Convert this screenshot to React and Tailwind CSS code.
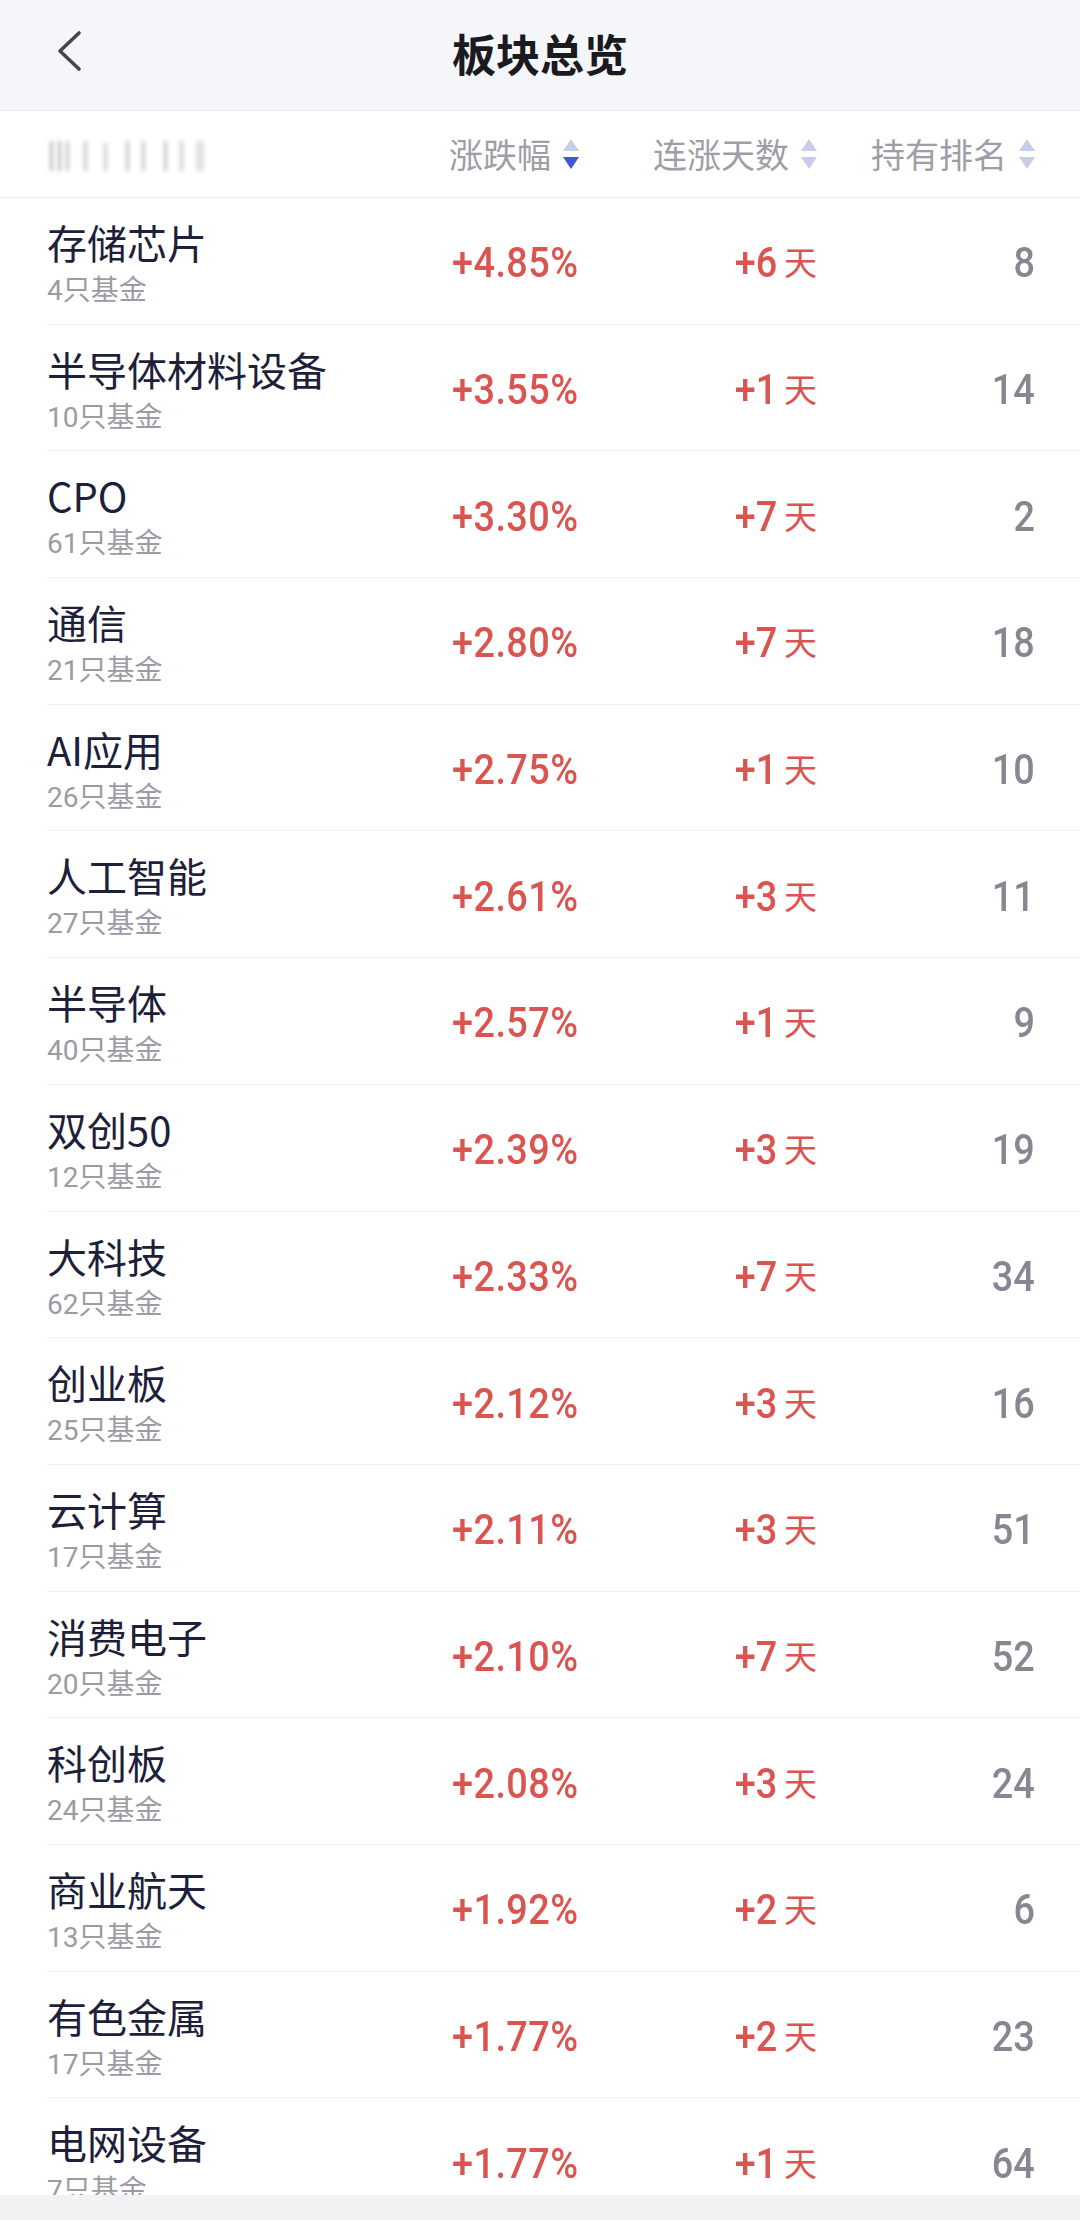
import React from "react";

const rows = [
  ["存储芯片", "4只基金", "+4.85%", "+6", "8"],
  ["半导体材料设备", "10只基金", "+3.55%", "+1", "14"],
  ["CPO", "61只基金", "+3.30%", "+7", "2"],
  ["通信", "21只基金", "+2.80%", "+7", "18"],
  ["AI应用", "26只基金", "+2.75%", "+1", "10"],
  ["人工智能", "27只基金", "+2.61%", "+3", "11"],
  ["半导体", "40只基金", "+2.57%", "+1", "9"],
  ["双创50", "12只基金", "+2.39%", "+3", "19"],
  ["大科技", "62只基金", "+2.33%", "+7", "34"],
  ["创业板", "25只基金", "+2.12%", "+3", "16"],
  ["云计算", "17只基金", "+2.11%", "+3", "51"],
  ["消费电子", "20只基金", "+2.10%", "+7", "52"],
  ["科创板", "24只基金", "+2.08%", "+3", "24"],
  ["商业航天", "13只基金", "+1.92%", "+2", "6"],
  ["有色金属", "17只基金", "+1.77%", "+2", "23"],
  ["电网设备", "7只基金", "+1.77%", "+1", "64"],
];

const cjk = "font-['Noto_Sans_CJK_SC',sans-serif]";
const num = "font-['Roboto','Noto_Sans_CJK_SC',sans-serif]";

function SortIcon({ active }) {
  return (
    <svg width="16" height="30" viewBox="0 0 16 30" className="shrink-0">
      <polygon points="8,0 16,12 0,12" fill="#c9cce8" />
      <polygon points="0,18 16,18 8,30" fill={active ? "#3d59d6" : "#c9cce8"} />
    </svg>
  );
}

function HeadCell({ label, active }) {
  return (
    <div className="flex items-center justify-end gap-[12px]">
      <span className={`${cjk} text-[34px] leading-none text-[#9e9ea6]`}>{label}</span>
      <SortIcon active={active} />
    </div>
  );
}

export default function App() {
  return (
    <div className="w-[1080px] h-[2220px] flex flex-col overflow-hidden bg-white">
      {/* Top bar */}
      <div className="h-[111px] shrink-0 bg-[#f5f6fa] border-b border-[#ebecf0] flex items-center relative">
        <div className="w-full flex items-center justify-center pb-[4px]">
          <span className={`${cjk} text-[44px] font-bold text-[#1a1a1f] leading-none`}>板块总览</span>
        </div>
        <svg
          className="absolute left-[55px] top-[30px]"
          width="28"
          height="42"
          viewBox="0 0 28 42"
          fill="none"
        >
          <polyline
            points="24,3 5,21 24,39"
            stroke="#45464f"
            strokeWidth="3.6"
            strokeLinecap="round"
            strokeLinejoin="round"
          />
        </svg>
      </div>

      {/* Table header */}
      <div className="h-[87px] shrink-0 border-b border-[#eeeef1] grid grid-cols-[1fr_179px_238px_218px] items-center pl-[50px] pr-[45px]">
        <div className="flex items-end gap-[5px] h-[34px] blur-[2px] opacity-60">
          <div className="w-[3px] h-[30px] bg-[#8a8a8a]" />
          <div className="w-[3px] h-[30px] bg-[#8a8a8a]" />
          <div className="w-[3px] h-[30px] bg-[#9a9a9a] mr-[10px]" />
          <div className="w-[3px] h-[30px] bg-[#a0a0a0] mr-[12px]" />
          <div className="w-[3px] h-[28px] bg-[#a8a8a8] mr-[14px]" />
          <div className="w-[3px] h-[30px] bg-[#9a9a9a] mr-[8px]" />
          <div className="w-[3px] h-[30px] bg-[#a0a0a0] mr-[14px]" />
          <div className="w-[3px] h-[30px] bg-[#9a9a9a] mr-[8px]" />
          <div className="w-[3px] h-[30px] bg-[#a5a5a5] mr-[8px]" />
          <div className="w-[8px] h-[30px] bg-[#cccccc]" />
        </div>
        <HeadCell label="涨跌幅" active />
        <HeadCell label="连涨天数" />
        <HeadCell label="持有排名" />
      </div>

      {/* List */}
      <div className="flex-1 overflow-hidden">
        {rows.map(([name, sub, pct, days, rank]) => (
          <div
            key={name}
            className="h-[126.7px] ml-[47px] border-b border-[#f0f0f2] grid grid-cols-[1fr_179px_238px_218px] pr-[45px]"
          >
            <div className="flex flex-col pt-[20px]">
              <span className={`${cjk} text-[40px] leading-[48px] text-[#1d1f3b] whitespace-nowrap`}>{name}</span>
              <span className={`${num} text-[28px] leading-[36px] mt-[7px] text-[#9b9ba3] whitespace-nowrap`}>{sub}</span>
            </div>
            <div className="flex items-center justify-end pt-[5px]">
              <span className={`${num} inline-block origin-right scale-x-[0.9] text-[42px] font-medium leading-none text-[#da5450] tracking-[0.5px]`}>{pct}</span>
            </div>
            <div className="flex items-center justify-end pt-[5px]">
              <span className={`${num} inline-block origin-right scale-x-[0.9] text-[42px] font-medium leading-none text-[#da5450]`}>{days}</span>
              <span className={`${cjk} text-[33px] leading-none text-[#da5450] ml-[7px] mb-[3px]`}>天</span>
            </div>
            <div className="flex items-center justify-end pt-[5px]">
              <span className={`${num} inline-block origin-right scale-x-[0.9] text-[42px] font-medium leading-none text-[#868791]`}>{rank}</span>
            </div>
          </div>
        ))}
      </div>

      {/* Bottom bar */}
      <div className="h-[25px] shrink-0 bg-[#f2f2f4]" />
    </div>
  );
}
